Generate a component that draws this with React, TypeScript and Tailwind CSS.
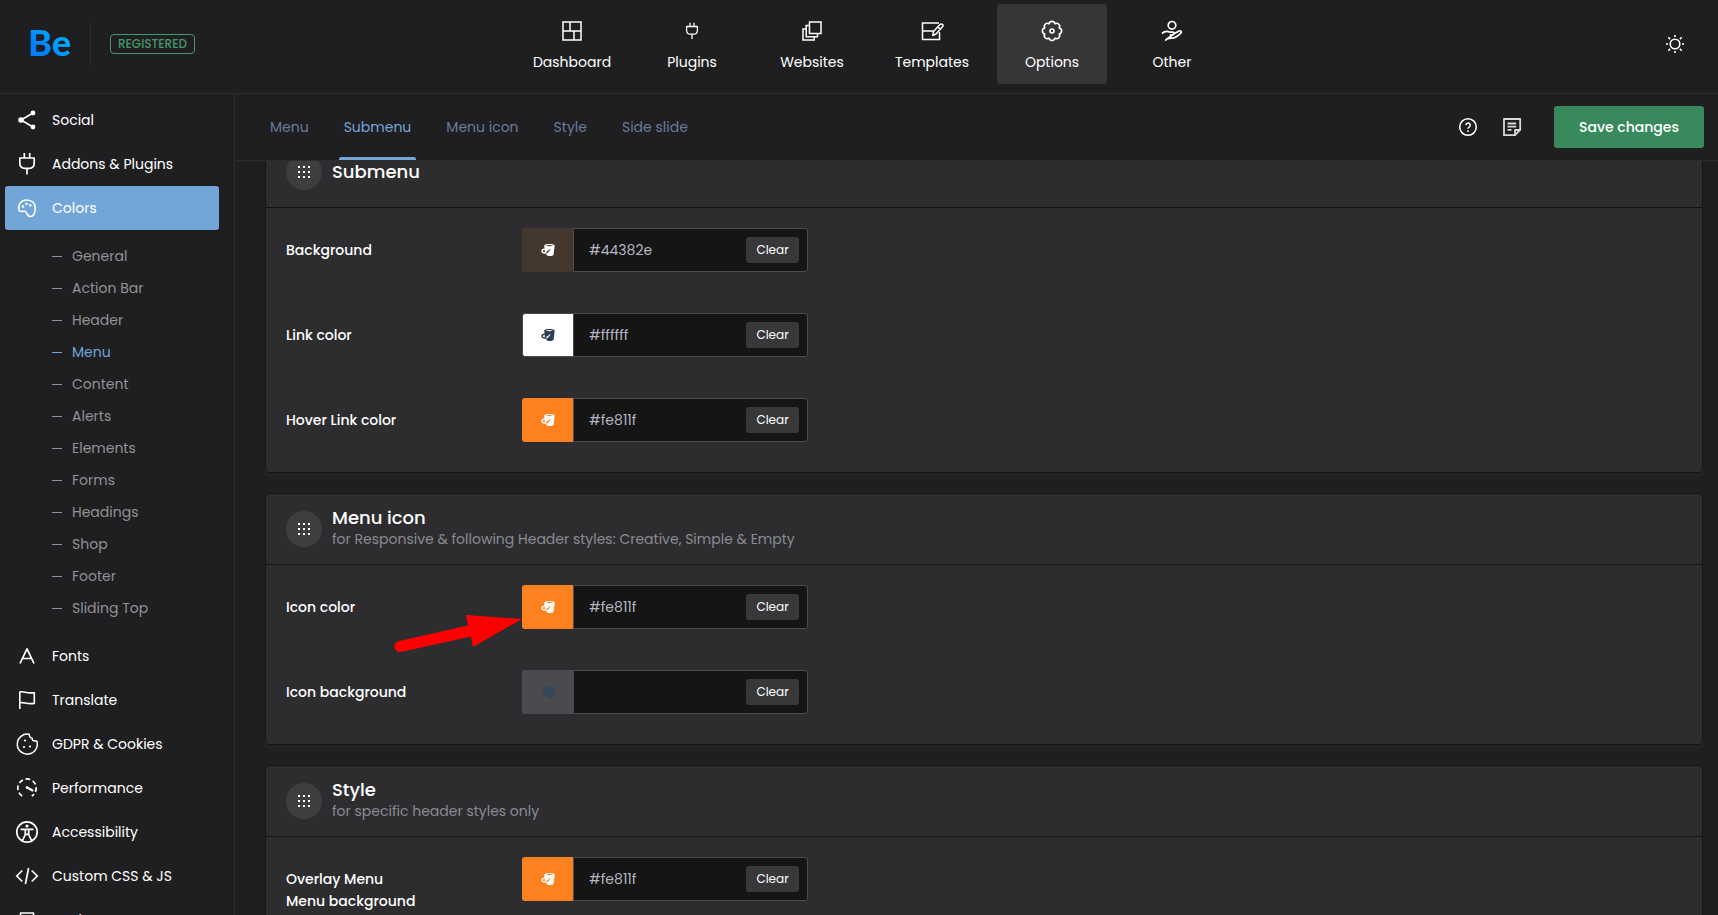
import React from 'react';

type IconProps = { className?: string };

const Svg: React.FC<{ className?: string; sw?: number; children: React.ReactNode }> = ({ className = 'size-6', sw = 1.5, children }) => (
    <svg className={className} viewBox="0 0 24 24" fill="none" stroke="currentColor" strokeWidth={sw} aria-hidden="true">
        {children}
    </svg>
);

const DashboardIcon = () => (
    <Svg>
        <path d="M3 3h18v18H3zM3 12h18M10 3v9M14 12v9" />
    </Svg>
);

const PlugIcon: React.FC<IconProps> = ({ className }) => (
    <Svg className={className} sw={1.7}>
        <path d="M9.3 1v5M14.7 1v5M4.800 6h14.400v5q0 5.300-5 5.300h-4.400q-5 0-5-5.300zM12 16.300v6.200" strokeLinejoin="round" />
    </Svg>
);

const WebsitesIcon = () => (
    <Svg>
        <path d="M9.500 3h11.500v11.500H9.500zM9.500 6.500H6.200v11.300h11.300v-3.300M6.200 10H3v11h11.200v-3.200" />
    </Svg>
);

const TemplatesIcon = () => (
    <Svg>
        <path d="M19 4H2.500v16.500h17V13M2.500 12h11" />
        <path d="M12.800 16.500l.7-4 6.500-7a1.600 1.600 0 0 1 2.500 2.300l-6.500 7.200zM17.800 8l2.500 2.300" strokeLinejoin="round" />
    </Svg>
);

const GearIcon = () => (
    <Svg sw={1.6}>
        <path
            d="M19.200 9.020A3.050 3.050 0 0 1 19.200 14.980A3.050 3.050 0 0 1 14.980 19.200A3.050 3.050 0 0 1 9.020 19.200A3.050 3.050 0 0 1 4.800 14.980A3.050 3.050 0 0 1 4.800 9.020A3.050 3.050 0 0 1 9.020 4.800A3.050 3.050 0 0 1 14.980 4.800A3.050 3.050 0 0 1 19.200 9.020z"
            strokeLinejoin="round"
        />
        <circle cx="12" cy="12" r="2" />
    </Svg>
);

const HandIcon = () => (
    <Svg sw={1.7}>
        <circle cx="12" cy="6.300" r="3.800" />
        <path
            d="M2 14.500c2.500-2.300 5-2.600 7.500-1.400h3.300c1.700 0 1.900 2.500 0 2.700H9.800M14.500 14.500l4.500-2.500c1.800-.8 3.200.8 1.800 2.100-3 3-5.800 5-8.800 5-2.500 0-4.500-.2-6.300 1.900z"
            strokeLinejoin="round"
        />
    </Svg>
);

const SunIcon = () => (
    <Svg sw={1.6}>
        <circle cx="12" cy="12" r="4.800" />
        <path d="M12 3v2M12 19v2M3 12h2M19 12h2M5.300 5.300l1.800 1.800M16.900 16.900l1.800 1.800M5.300 18.700l1.800-1.800M16.900 7.100l1.800-1.800" />
    </Svg>
);

const HelpIcon = () => (
    <Svg>
        <circle cx="12" cy="12" r="8.300" />
        <path d="M9.900 10.200a2.200 2.200 0 1 1 3.300 1.900q-1.200.6-1.200 1.700M12 15.300v1.600" />
    </Svg>
);

const NoteIcon = () => (
    <Svg sw={1.8}>
        <path d="M4 4h16.200v10.800L15 20.200H4zM20 15h-5v5M7.500 8.500h8.700M7.500 11.700h8.700M7.500 14.900h4" strokeLinejoin="round" />
    </Svg>
);

const ShareIcon = () => (
    <Svg sw={1.7}>
        <path d="M18 5L6 12l12 7" />
        <g fill="currentColor" stroke="none">
            <circle cx="18" cy="5" r="2.400" />
            <circle cx="6" cy="12" r="2.800" />
            <circle cx="18" cy="19" r="2.400" />
        </g>
    </Svg>
);

const PaletteIcon = () => (
    <Svg sw={1.6}>
        <path d="M3.900 14C2.700 9 6 4 11.500 4c5.500 0 8.700 3.500 8.700 8.300 0 4.500-1.700 8.200-5 8.200-4.200 0-2.200-4.700-5.500-5.200-2.500-.4-5 1.300-5.800-1.300z" />
        <g fill="currentColor" stroke="none">
            <circle cx="8" cy="10.500" r="1.300" />
            <circle cx="11.500" cy="7.700" r="1.300" />
            <circle cx="15.300" cy="9.300" r="1.300" />
        </g>
    </Svg>
);

const FontIcon = () => (
    <Svg sw={1.7}>
        <path d="M5 19.500L12 4.800l7 14.700M7.500 14.500h9" strokeLinejoin="round" />
    </Svg>
);

const FlagIcon = () => (
    <Svg sw={1.6}>
        <path d="M4.800 21V4c4-1 6.500 1.800 14.500.7v10.700c-8 1-10.500-1.700-14.500-.6" strokeLinejoin="round" />
    </Svg>
);

const CookieIcon = () => (
    <Svg>
        <path d="M14.200 2.300a10 10 0 1 0 7.600 6.700h-2.600a2.500 2.500 0 0 1-2-2.800c-1.800 0-3-1.600-3-3.900z" strokeLinejoin="round" />
        <g fill="currentColor" stroke="none">
            <circle cx="10" cy="8.500" r="1.100" />
            <circle cx="9" cy="15" r="1.100" />
            <circle cx="15" cy="14.500" r="1.100" />
        </g>
    </Svg>
);

const GaugeIcon = () => (
    <Svg sw={1.7}>
        <path d="M7.200 20a9.200 9.200 0 1 1 9.600 0" strokeDasharray="4.700 2.700" />
        <path d="M12 11.500l5.500 3" strokeWidth="2" strokeLinecap="round" />
        <circle cx="12" cy="11.500" r="1.300" fill="currentColor" stroke="none" />
    </Svg>
);

const AccessibilityIcon = () => (
    <Svg sw={1.7}>
        <circle cx="12" cy="12" r="10.200" />
        <circle cx="12" cy="6" r="1.600" fill="currentColor" stroke="none" />
        <path d="M5.500 9.300h13M10.300 9.500v5L7.500 20.500M13.700 9.500v5l2.800 6M10.300 14.300h3.400" />
    </Svg>
);

const CodeIcon = () => (
    <Svg sw={1.7}>
        <path d="M7.300 6.500L1.800 12l5.500 5.500M16.700 6.500l5.500 5.500-5.500 5.500M13.600 4l-3.200 16" />
    </Svg>
);

const BackupIcon = () => (
    <Svg>
        <path d="M5.500 21V5h13v16zM5.500 9h13" strokeLinejoin="round" />
    </Svg>
);

const BucketIcon = () => (
    <svg className="size-4" viewBox="0 0 16 16" aria-hidden="true">
        <path
            d="M4.200 3.200C6 1.600 13 1.600 14.700 3.200L13.600 12.700C12.500 14.400 7.800 14.400 6.500 12.900L6.200 11.700C8.500 10.700 10.300 9 10.500 6.600 9 8.600 7 9.800 4.900 10.200zM5.600 3.600c2 1 5.600 1 7.600 0-2-.9-5.600-.9-7.600 0z"
            fill="currentColor"
            fillRule="evenodd"
        />
        <path d="M4.800 6.900C2.800 7.200 1.900 8.300 2.100 9.500 2.400 11 4.500 11.300 6.400 10.500" fill="none" stroke="currentColor" strokeWidth="1.500" />
    </svg>
);

const topNav = [
    { label: 'Dashboard', icon: <DashboardIcon /> },
    { label: 'Plugins', icon: <PlugIcon className="size-[18px] my-[3px]" /> },
    { label: 'Websites', icon: <WebsitesIcon /> },
    { label: 'Templates', icon: <TemplatesIcon /> },
    { label: 'Options', icon: <GearIcon />, active: true },
    { label: 'Other', icon: <HandIcon /> },
];

const colorPages = ['General', 'Action Bar', 'Header', 'Menu', 'Content', 'Alerts', 'Elements', 'Forms', 'Headings', 'Shop', 'Footer', 'Sliding Top'];

const sideNav = [
    { label: 'Social', icon: <ShareIcon /> },
    { label: 'Addons & Plugins', icon: <PlugIcon className="size-6" /> },
    { label: 'Colors', icon: <PaletteIcon />, children: colorPages },
    { label: 'Fonts', icon: <FontIcon /> },
    { label: 'Translate', icon: <FlagIcon /> },
    { label: 'GDPR & Cookies', icon: <CookieIcon /> },
    { label: 'Performance', icon: <GaugeIcon /> },
    { label: 'Accessibility', icon: <AccessibilityIcon /> },
    { label: 'Custom CSS & JS', icon: <CodeIcon /> },
    { label: 'Backup & Reset', icon: <BackupIcon /> },
];

const tabs = ['Menu', 'Submenu', 'Menu icon', 'Style', 'Side slide'];

type Field = { id: string; label: string; value: string; pointed?: boolean };

const cards: { title: string; desc?: string; fields: Field[] }[] = [
    {
        title: 'Submenu',
        fields: [
            { id: 'submenu-bg', label: 'Background', value: '#44382e' },
            { id: 'submenu-link', label: 'Link color', value: '#ffffff' },
            { id: 'submenu-hover', label: 'Hover Link color', value: '#fe811f' },
        ],
    },
    {
        title: 'Menu icon',
        desc: 'for Responsive & following Header styles: Creative, Simple & Empty',
        fields: [
            { id: 'icon-color', label: 'Icon color', value: '#fe811f', pointed: true },
            { id: 'icon-bg', label: 'Icon background', value: '' },
        ],
    },
    {
        title: 'Style',
        desc: 'for specific header styles only',
        fields: [{ id: 'overlay-bg', label: 'Overlay Menu\nMenu background', value: '#fe811f' }],
    },
];

const swatchIconColor = (value: string) => {
    if (!value) return 'text-[#33475b]';
    return value === '#ffffff' ? 'text-[#2c3e50]' : 'text-white';
};

const ColorField: React.FC<{ field: Field }> = ({ field }) => {
    const [value, setValue] = React.useState(field.value);

    // white keeps the neutral border, every other color paints over it
    const swatchStyle = value ? { backgroundColor: value, borderColor: value === '#ffffff' ? undefined : value } : undefined;

    return (
        <div className="flex items-start min-h-[85px] py-5 px-5">
            <label htmlFor={field.id} className="w-[236px] shrink-0 pt-[11px] text-sm leading-[22px] font-medium text-white whitespace-pre-line">
                {field.label}
            </label>
            <div className="relative flex w-[286px] h-11">
                <button
                    type="button"
                    aria-label="Pick color"
                    className={`flex items-center justify-center w-[51px] shrink-0 rounded-l-[3px] border-y border-l border-[#4b4a4f] bg-[#4b4a4f] ${swatchIconColor(value)}`}
                    style={swatchStyle}
                >
                    <BucketIcon />
                </button>
                <div className="flex flex-1 min-w-0 items-center rounded-r-[3px] border border-[#4b4a4f] bg-[#151515]">
                    <input
                        id={field.id}
                        type="text"
                        value={value}
                        onChange={(e) => setValue(e.target.value)}
                        className="flex-1 min-w-0 h-full pl-[15px] bg-transparent text-sm text-[#b5b5c3] outline-none"
                    />
                    <button
                        type="button"
                        onClick={() => setValue('')}
                        className="mr-2 h-[26px] w-[53px] shrink-0 rounded-[3px] bg-[#38383a] text-xs text-white"
                    >
                        Clear
                    </button>
                </div>
                {field.pointed && (
                    <svg className="absolute right-full top-7 w-32 h-10" viewBox="0 0 128 40" fill="#ff0000" aria-hidden="true">
                        <path d="M128 6L79 34 77 23.500 7 39A5.500 5.500 0 0 1 4.500 28.300L74 12.500 72 2z" />
                    </svg>
                )}
            </div>
        </div>
    );
};

export default function App() {
    return (
        <div className="flex flex-col h-screen overflow-hidden bg-[#1f1f21] text-white font-['Poppins','Inter',sans-serif]">
            <header className="flex items-center shrink-0 pl-[26px] pt-1 pb-[9px] border-b border-[#2d2d2f]">
                <div className="flex flex-1 items-center">
                    <a href="#home" className="w-[64px] pl-0.5 pb-1 text-[36px] leading-10 font-black font-['Lato',sans-serif]">
                        <span className="bg-linear-to-tr from-[#0080ff] from-30% to-[#00c8ff] bg-clip-text text-transparent">Be</span>
                    </a>
                    <span className="w-px h-[42px] bg-[#2d2d2f]" />
                    <span className="ml-[19px] flex items-center justify-center w-[85px] h-5 rounded border border-[#45976a] text-xs font-medium text-[#45976a]">REGISTERED</span>
                </div>
                <nav className="flex gap-2.5">
                    {topNav.map((item) => (
                        <a
                            key={item.label}
                            href="#nav"
                            className={`flex flex-col items-center w-[110px] h-20 pt-[15px] gap-[7px] rounded-[3px] ${item.active ? 'bg-[#363638]' : ''}`}
                        >
                            {item.icon}
                            <span className="text-sm leading-6">{item.label}</span>
                        </a>
                    ))}
                </nav>
                <div className="flex flex-1 justify-end">
                    <button type="button" aria-label="Toggle theme" className="mr-[31px]"><SunIcon /></button>
                </div>
            </header>

            <div className="flex flex-1 min-h-0">
                <aside className="w-[235px] shrink-0 overflow-hidden border-r border-[#2d2d2f] pt-1 pl-[5px] pr-[15px]">
                    {sideNav.map((item) => (
                        <div key={item.label}>
                            <a
                                href="#section"
                                className={`flex items-center h-11 pl-2.5 gap-[13px] rounded-[3px] text-sm ${item.children ? 'bg-[#72a5d8]' : ''}`}
                            >
                                {item.icon}
                                {item.label}
                            </a>
                            {item.children && (
                                <ul className="py-2.5 pl-[47px]">
                                    {item.children.map((child) => (
                                        <li key={child}>
                                            <a href="#page" className={`flex items-center h-8 gap-2.5 text-sm ${child === 'Menu' ? 'text-[#72a5d8]' : 'text-[#929296]'}`}>
                                                <span className="w-2.5 h-px bg-current" />
                                                {child}
                                            </a>
                                        </li>
                                    ))}
                                </ul>
                            )}
                        </div>
                    ))}
                </aside>

                <main className="flex flex-col flex-1 min-w-0">
                    <div className="flex items-center shrink-0 h-[67px] pl-[30px] pr-[14px] border-b border-[#2d2d2f]">
                        <nav className="flex self-stretch gap-[25px]">
                            {tabs.map((tab) => (
                                <a
                                    key={tab}
                                    href="#tab"
                                    className={`relative flex items-center px-[5px] text-sm ${tab === 'Submenu' ? 'text-[#72a5d8]' : 'text-[#6b7a9c]'}`}
                                >
                                    {tab}
                                    {tab === 'Submenu' && <span className="absolute inset-x-0 bottom-0 h-[3px] rounded-t-[2px] bg-[#72a5d8]" />}
                                </a>
                            ))}
                        </nav>
                        <div className="flex items-center ml-auto">
                            <button type="button" aria-label="Help" className="mr-5"><HelpIcon /></button>
                            <button type="button" aria-label="Notes" className="mr-[30px] text-[#d9d9d9]"><NoteIcon /></button>
                            <button type="button" className="w-[150px] h-[42px] rounded-[3px] bg-[#388a5c] text-sm font-medium text-white">
                                Save changes
                            </button>
                        </div>
                    </div>

                    <div className="flex-1 min-h-0 overflow-hidden">
                        {/* list is scrolled slightly past the first card's top edge */}
                        <div className="-mt-[25px] pl-[30px] pr-[15px] flex flex-col gap-5">
                            {cards.map((card) => (
                                <section key={card.title} className="rounded border border-[#151515] bg-[#2d2d2f] shadow-[0_5px_5px_rgba(45,45,47,0.3)]">
                                    <header className="flex items-center h-[71px] px-5 gap-2.5 border-b border-[#151515]">
                                        <span className="grid grid-cols-[2px_2px_2px] gap-[3px] place-content-center size-9 rounded-full bg-[#3e3e40]">
                                            {Array.from({ length: 9 }, (_, i) => (
                                                <span key={i} className="size-0.5 bg-white" />
                                            ))}
                                        </span>
                                        <div>
                                            <h2 className="text-lg leading-[22px] font-medium">{card.title}</h2>
                                            {card.desc && <p className="pb-0.5 text-sm leading-5 text-[#8a8a92]">{card.desc}</p>}
                                        </div>
                                    </header>
                                    <div className="pb-[9px]">
                                        {card.fields.map((field) => (
                                            <ColorField key={field.id} field={field} />
                                        ))}
                                    </div>
                                </section>
                            ))}
                        </div>
                    </div>
                </main>
            </div>
        </div>
    );
}
